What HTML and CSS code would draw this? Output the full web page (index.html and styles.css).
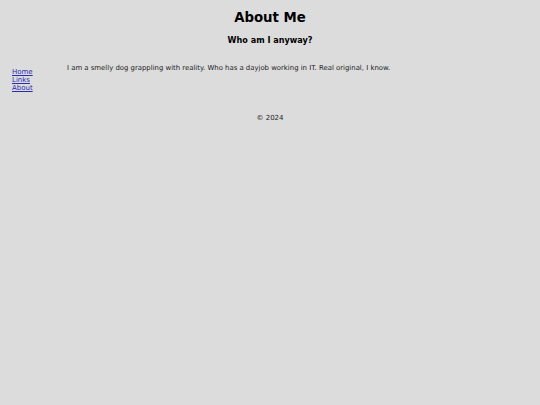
FILE: index.html
```html
<!DOCTYPE html>
<html>
<head>
<meta charset="utf-8">
<link rel="stylesheet" href="styles.css">
</head>
<body>
<header class="top">
  <h1 class="title">About Me</h1>
  <h2 class="subtitle">Who am I anyway?</h2>
</header>
<div class="layout">
  <nav class="nav">
    <a href="#">Home</a>
    <a href="#">Links</a>
    <a href="#">About</a>
  </nav>
  <main class="content">
    <p>I am a smelly dog grappling with reality. Who has a dayjob working in IT. Real original, I know.</p>
  </main>
</div>
<footer class="foot">© 2024</footer>
</body>
</html>
```
FILE: styles.css
```css
html { background: #dcdcdc; }
body {
  margin: 0;
  padding: 8px 12px;
  font-family: "DejaVu Sans", sans-serif;
  color: #222;
}
.top { text-align: center; }
.title {
  margin: 0;
  padding-top: 1px;
  font-size: 13.3px;
  line-height: 18px;
  font-weight: bold;
  color: #000;
}
.subtitle {
  margin: 7px 0 0;
  font-size: 8.1px;
  line-height: 12px;
  font-weight: bold;
  color: #000;
}
.layout {
  display: flex;
  margin-top: 18px;
}
.nav {
  display: flex;
  flex-direction: column;
  width: 55px;
  padding-top: 4px;
  font-size: 7px;
  line-height: 8px;
}
.nav a { color: #2a2ab8; }
.content { font-size: 6.9px; line-height: 9px; color: #222; }
.content p { margin: 0; }
.foot {
  margin-top: 22px;
  text-align: center;
  font-size: 7px;
  color: #222;
}
```
